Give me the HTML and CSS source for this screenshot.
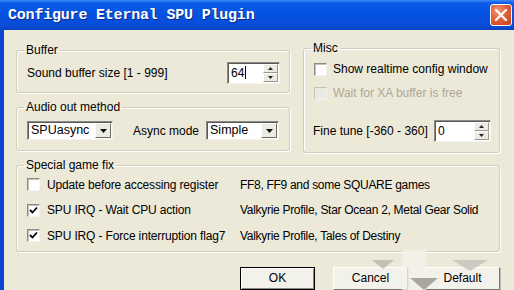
FILE: index.html
```html
<!DOCTYPE html>
<html>
<head>
<meta charset="utf-8">
<link rel="stylesheet" href="styles.css">
</head>
<body>
<div class="window">
  <div class="titlebar">
    <span class="title">Configure Eternal SPU Plugin</span>
    <span class="close"><svg width="14" height="14" viewBox="0 0 14 14"><path d="M2 2 L12 12 M12 2 L2 12" stroke="#fff" stroke-width="2.2" stroke-linecap="round"/></svg></span>
  </div>
  <div class="body">
    <div class="top">
      <div class="leftcol">
        <fieldset class="group g-buffer">
          <legend>Buffer</legend>
          <div class="row between">
            <span>Sound buffer size [1 - 999]</span>
            <div class="spin s-buffer"><span class="val">64<i class="caret"></i></span><span class="spinbtns"><b><svg width="5" height="3" viewBox="0 0 5 3"><path d="M0 3 L2.5 0 L5 3Z" fill="#222"/></svg></b><b><svg width="5" height="3" viewBox="0 0 5 3"><path d="M0 0 L2.5 3 L5 0Z" fill="#222"/></svg></b></span></div>
          </div>
        </fieldset>
        <fieldset class="group g-audio">
          <legend>Audio out method</legend>
          <div class="row">
            <div class="combo c-method"><span class="val">SPUasync</span><span class="dd"><svg width="7" height="4" viewBox="0 0 7 4"><path d="M0 0 L7 0 L3.5 4Z" fill="#111"/></svg></span></div>
            <span class="lbl-async">Async mode</span>
            <div class="combo c-mode"><span class="val">Simple</span><span class="dd"><svg width="7" height="4" viewBox="0 0 7 4"><path d="M0 0 L7 0 L3.5 4Z" fill="#111"/></svg></span></div>
          </div>
        </fieldset>
      </div>
      <fieldset class="group g-misc">
        <legend>Misc</legend>
        <div class="check"><span class="box"></span><span>Show realtime config window</span></div>
        <div class="check disabled"><span class="box"></span><span>Wait for XA buffer is free</span></div>
        <div class="row between fine">
          <span>Fine tune [-360 - 360]</span>
          <div class="spin s-fine"><span class="val">0</span><span class="spinbtns"><b><svg width="5" height="3" viewBox="0 0 5 3"><path d="M0 3 L2.5 0 L5 3Z" fill="#222"/></svg></b><b><svg width="5" height="3" viewBox="0 0 5 3"><path d="M0 0 L2.5 3 L5 0Z" fill="#222"/></svg></b></span></div>
        </div>
      </fieldset>
    </div>
    <fieldset class="group g-special">
      <legend>Special game fix</legend>
      <div class="fixes">
        <div class="check"><span class="box"></span><span>Update before accessing register</span></div>
        <span class="games">FF8, FF9 and some SQUARE games</span>
        <div class="check"><span class="box checked"><svg width="9" height="9" viewBox="0 0 9 9"><path d="M1 4 L3.5 6.5 L8 1.5" fill="none" stroke="#000" stroke-width="1.8"/></svg></span><span>SPU IRQ - Wait CPU action</span></div>
        <span class="games">Valkyrie Profile, Star Ocean 2, Metal Gear Solid</span>
        <div class="check"><span class="box checked"><svg width="9" height="9" viewBox="0 0 9 9"><path d="M1 4 L3.5 6.5 L8 1.5" fill="none" stroke="#000" stroke-width="1.8"/></svg></span><span>SPU IRQ - Force interruption flag7</span></div>
        <span class="games">Valkyrie Profile, Tales of Destiny</span>
      </div>
    </fieldset>
    <div class="buttons">
      <button class="btn default-btn">OK</button>
      <button class="btn">Cancel</button>
      <button class="btn">Default</button>
    </div>
  </div>
  <div class="strip"></div>
  <svg class="watermark" width="140" height="40" viewBox="0 0 140 40">
    <rect x="30" y="0" width="24" height="40" fill="#f4f3ee" opacity="0.75"/>
    <path d="M0 10 L22 10 L11 19Z" fill="#b8b6ae" opacity="0.8"/>
    <path d="M38 28 L66 28 L52 40Z" fill="#a9a7a0"/>
    <path d="M80 10 L116 10 L98 21Z" fill="#c4c2ba" opacity="0.8"/>
  </svg>
</div>
</body>
</html>
```

FILE: styles.css
```css
* { box-sizing: border-box; }
html, body { margin: 0; padding: 0; background: #ece9d8; }
.window {
  position: relative;
  width: 514px; height: 290px; overflow: hidden;
  display: flex; flex-direction: column;
  font-family: "Liberation Sans", Arial, sans-serif; font-size: 12px; color: #000;
}
.titlebar {
  height: 30px; flex: none;
  display: flex; align-items: center; justify-content: space-between;
  padding: 0 2px 0 8px;
  background: linear-gradient(#3c8cf6 0, #0b5ce8 3px, #0552e2 45%, #0a4cd6 85%, #0a43c4 100%);
}
.title {
  font-family: "Liberation Mono", "DejaVu Sans Mono", monospace;
  font-weight: bold; font-size: 15px; color: #fff;
  text-shadow: 1px 1px 0 #0a2a8a;
  letter-spacing: -0.2px;
}
.close {
  width: 22px; height: 22px; border: 1px solid #fff; border-radius: 3px;
  background: radial-gradient(circle at 35% 30%, #f09a7c 0, #e0603c 45%, #c8411c 100%);
  display: flex; align-items: center; justify-content: center;
}
.body {
  flex: 1;
  border-left: 4px solid #0a48d4;
  padding: 11px 14px 0 12px;
  display: flex; flex-direction: column;
}
.top { display: flex; gap: 13px; }
.leftcol { width: 274px; display: flex; flex-direction: column; gap: 7px; margin-top: 2px; }
fieldset.group {
  margin: 0; min-width: 0;
  border: 1px solid #d0cdbd;
  border-radius: 3px;
  box-shadow: inset 1px 1px 0 #fff, 1px 1px 0 #fff;
}
fieldset.group legend {
  padding: 0 2px; margin-left: -3px;
  line-height: 14px; height: 14px;
}
.g-buffer { padding: 5px 9px 8px 10px; }
.g-audio { padding: 7px 9px 10px 10px; }
.g-misc { width: 197px; padding: 6px 7px 10px 10px; }
.g-special { margin-top: 5px !important; padding: 0 10px 2px 10px; }
.row { display: flex; align-items: center; }
.between { justify-content: space-between; }
.fine { margin-top: 19px; padding-right: 1px; margin-left: -1px; }

.spin {
  height: 22px; background: #fff; display: flex; align-items: stretch;
  border: 1px solid; border-color: #8a8a88 #f4f3ee #f4f3ee #8a8a88;
  box-shadow: inset 1px 1px 0 #5a5a58;
}
.s-buffer { width: 53px; }
.s-fine { width: 57px; }
.spin .val { flex: 1; padding: 3px 0 0 3px; font-size: 12px; line-height: 14px; }
.caret { display: inline-block; width: 1px; height: 13px; background: #000; vertical-align: -2px; margin-left: 1px; }
.spinbtns { width: 15px; display: flex; flex-direction: column; margin: 1px 1px 1px 0; }
.spinbtns b {
  flex: 1; display: flex; align-items: center; justify-content: center;
  background: #ecebe3;
  border: 1px solid; border-color: #fff #9a9890 #9a9890 #fff;
}

.combo {
  height: 19px; background: #fff; display: flex; align-items: stretch;
  border: 1px solid; border-color: #8a8a88 #f4f3ee #f4f3ee #8a8a88;
  box-shadow: inset 1px 1px 0 #5a5a58;
}
.c-method { width: 86px; }
.c-mode { width: 73px; }
.combo .val { flex: 1; padding: 1px 0 0 3px; line-height: 15px; font-size: 12.5px; }
.combo .dd {
  width: 16px; margin: 1px 1px 1px 0;
  display: flex; align-items: center; justify-content: center;
  background: #ecebe3;
  border: 1px solid; border-color: #fff #6d6b64 #6d6b64 #fff;
}
.lbl-async { margin-left: 20px; margin-right: 7px; }

.check { display: flex; align-items: center; height: 16px; gap: 6px; white-space: nowrap; }
.g-misc .check + .check { margin-top: 8px; }
.box {
  width: 13px; height: 13px; flex: none; background: #fff;
  border: 1px solid; border-color: #8a8a88 #f4f3ee #f4f3ee #8a8a88;
  box-shadow: inset 1px 1px 0 #c4c2b8;
  display: flex; align-items: center; justify-content: center;
}
.disabled { color: #aca899; }
.disabled .box { background: #ecebe3; border-color: #c4c2b8 #f4f3ee #f4f3ee #c4c2b8; box-shadow: none; }

.fixes {
  display: grid; grid-template-columns: 213px 1fr;
  grid-auto-rows: 25.5px; align-items: center;
}
.fixes .check { gap: 7px; letter-spacing: -0.15px; }
.games { white-space: nowrap; letter-spacing: -0.3px; }

.buttons { display: flex; justify-content: flex-end; gap: 17px; margin-top: 15px; }
.btn {
  width: 75px; height: 23px; padding: 0;
  font-family: "Liberation Sans", Arial, sans-serif; font-size: 12px; color: #000;
  background: #f2f1ea;
  border: 1px solid; border-color: #fff #7a786e #7a786e #fff;
  box-shadow: 1px 1px 0 #bdbab0;
}
.default-btn { border: 1px solid #000; box-shadow: inset 1px 1px 0 #fff, inset -1px -1px 0 #888; margin-right: 1px; }
.strip { height: 5px; flex: none; background: #262626; }
.watermark { position: absolute; left: 372px; top: 250px; pointer-events: none; }
```
